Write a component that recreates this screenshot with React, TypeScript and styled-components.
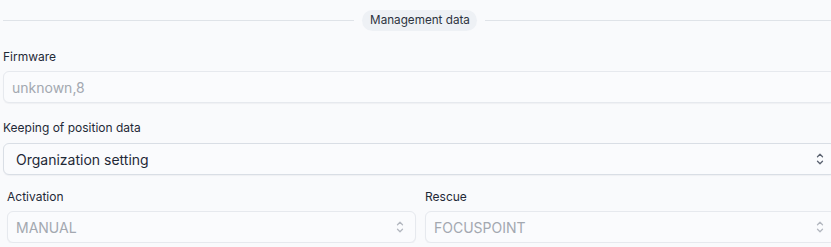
import React from 'react';
import styled, { createGlobalStyle } from 'styled-components';

const GlobalStyle = createGlobalStyle`
  html, body {
    margin: 0;
    padding: 0;
    background: #f9fafc;
    overflow: hidden;
  }
  body {
    font-family: Inter, "Noto Sans", sans-serif;
    color: #1f2937;
  }
`;

const Page = styled.div`
  width: 833px;
  padding: 10px 0 0 3px;
`;

const Divider = styled.div`
  display: flex;
  align-items: center;
  gap: 8px;
  height: 21px;
  margin-bottom: 18px;

  &::before, &::after {
    content: '';
    flex: 1;
    height: 1px;
    background: #dfe3e8;
  }
`;

const Pill = styled.span`
  font-size: 11.7px;
  line-height: 21px;
  padding: 0 7px 0 8px;
  border-radius: 11px;
  background: #eef1f5;
  color: #2d3440;
`;

const Field = styled.div<{ $gap?: number }>`
  display: flex;
  flex-direction: column;
  gap: ${p => p.$gap ?? 6}px;
  margin-bottom: ${p => p.$gap ? 14 : 17}px;
`;

const Label = styled.label`
  font-size: 12px;
  line-height: 16px;
  color: #1f2937;
`;

const Box = styled.div<{ $muted?: boolean; $pad?: number }>`
  box-sizing: border-box;
  height: 32px;
  display: flex;
  align-items: center;
  justify-content: space-between;
  padding: 0 11px 0 ${p => p.$pad ?? 8}px;
  border: 1px solid ${p => p.$muted ? '#e6e9ee' : '#d9dee5'};
  border-radius: 6px;
  background: #fafbfd;
  font-size: 14px;
  color: ${p => p.$muted ? '#a3a8b0' : '#1f2937'};
  box-shadow: 0 1px 1px rgba(15, 23, 42, 0.04);
`;

const Row = styled.div`
  display: grid;
  grid-template-columns: 409px 1fr;
  column-gap: 9px;
  padding: 0 0 0 4px;
`;

const Cell = styled.div`
  display: flex;
  flex-direction: column;
  gap: 6px;
`;

const Updown = ({ color }: { color: string }) => (
  <svg width="8" height="12" viewBox="0 0 8 12" fill="none" stroke={color} strokeWidth="1.3" strokeLinecap="round" strokeLinejoin="round">
    <path d="M1.5 3.8 L4 1.3 L6.5 3.8" />
    <path d="M1.5 8.2 L4 10.7 L6.5 8.2" />
  </svg>
);

export default function App() {
  return (
    <>
      <GlobalStyle />
      <Page>
        <Divider>
          <Pill>Management data</Pill>
        </Divider>

        <Field>
          <Label>Firmware</Label>
          <Box $muted>unknown,8</Box>
        </Field>

        <Field $gap={7}>
          <Label>Keeping of position data</Label>
          <Box $pad={12}>
            Organization setting
            <Updown color="#5b6270" />
          </Box>
        </Field>

        <Row>
          <Cell>
            <Label>Activation</Label>
            <Box $muted>
              MANUAL
              <Updown color="#b3b8c0" />
            </Box>
          </Cell>
          <Cell>
            <Label>Rescue</Label>
            <Box $muted>
              FOCUSPOINT
              <Updown color="#b3b8c0" />
            </Box>
          </Cell>
        </Row>
      </Page>
    </>
  );
}
